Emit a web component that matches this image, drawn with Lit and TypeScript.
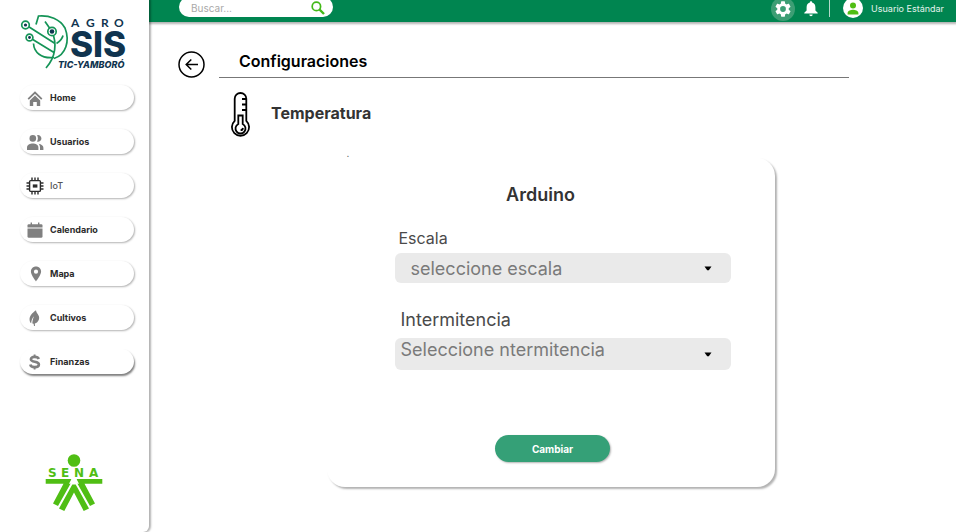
import { LitElement, html, svg, css } from "lit";
import { customElement } from "lit/decorators.js";
import { classMap } from "lit/directives/class-map.js";

const icons = {
  home: svg`<path d="M1.2 9.2 L8 2.6 L14.8 9.2" fill="none" stroke="currentColor" stroke-width="1.8"/><path d="M8 5.6 L13.2 10.6 V16 H9.8 V12 H6.2 V16 H2.8 V10.6Z" fill="currentColor"/>`,
  users: svg`<g fill="currentColor"><circle cx="5.8" cy="4.4" r="3.3"/><path d="M0 16 V13.6 C0 11 3 9.6 5.8 9.6 S11.4 11 11.4 13.6 V16Z"/><path d="M10 1.3 A3.3 3.3 0 1 1 10 7.5 C11.2 5.6 11.2 3.2 10 1.3Z"/><path d="M11.6 9.8 C14.4 10.4 16.4 11.6 16.4 13.8 V16 H13 V13.6 C13 12 12.6 10.8 11.6 9.8Z"/></g>`,
  chip: svg`<g fill="none" stroke="currentColor" stroke-width="1.4"><rect x="2.6" y="2.6" width="10.8" height="10.8" rx="1"/><path d="M5 2.6V-.5M8 2.6V-.5M11 2.6V-.5M5 13.4V16.5M8 13.4V16.5M11 13.4V16.5M2.6 5H-.5M2.6 8H-.5M2.6 11H-.5M13.4 5H16.5M13.4 8H16.5M13.4 11H16.5"/></g><rect x="5.8" y="6.4" width="4.6" height="3.2" fill="currentColor"/>`,
  calendar: svg`<g fill="currentColor"><path d="M.5 5.6 V3.4 Q.5 2.2 1.7 2.2 H14.3 Q15.5 2.2 15.5 3.4 V5.6Z"/><path d="M.5 6.6 H15.5 V14.4 Q15.5 15.8 14.1 15.8 H1.9 Q.5 15.8 .5 14.4Z"/><path d="M3.6 .4H5V4H3.6ZM11 .4h1.4V4H11Z"/></g>`,
  pin: svg`<path fill="currentColor" fill-rule="evenodd" d="M9 .6 C6 .6 3.9 2.8 3.9 5.6 C3.9 9.2 9 15.4 9 15.4 S14.1 9.2 14.1 5.6 C14.1 2.8 12 .6 9 .6Z M9 3.6 A2.1 2.1 0 1 1 9 7.8 A2.1 2.1 0 1 1 9 3.6Z"/>`,
  leaf: svg`<path fill="currentColor" d="M9 .2 C5 3 2.2 6.2 2.6 10 C2.7 11.6 3.2 12.6 4.2 13.2 C4.3 10.6 5.2 8.2 7 6.2 C5.8 9 5.3 11.4 5.4 13.6 L6.6 13.8 L7 16 H8 L7.8 13.6 C11.8 12.4 13.2 7.6 11.4 5.2 C10.6 3.6 9.2 2.4 9 .2Z"/>`,
  dollar: svg`<path fill="none" stroke="currentColor" stroke-width="2.6" d="M11.8 5 C11.3 3.6 9.8 2.9 7.6 2.9 C5.2 2.9 3.9 3.9 3.9 5.3 C3.9 8.9 11.9 6.6 11.9 10.5 C11.9 12.2 10.2 13.1 7.8 13.1 C5.3 13.1 3.6 12.1 3.3 10.4"/><path stroke="currentColor" stroke-width="1.9" d="M7.6 .4V3.4M7.6 12.6V15.6"/>`,
};

const items = [
  { label: "Home", icon: icons.home },
  { label: "Usuarios", icon: icons.users },
  { label: "IoT", icon: icons.chip, current: true },
  { label: "Calendario", icon: icons.calendar },
  { label: "Mapa", icon: icons.pin },
  { label: "Cultivos", icon: icons.leaf },
  { label: "Finanzas", icon: icons.dollar, raised: true },
];

@customElement("app-sidebar")
export class AppSidebar extends LitElement {
  static styles = css`
    :host {
      display: flex;
      flex-direction: column;
      box-sizing: border-box;
      width: 149px;
      padding: 14px 0 20px 20px;
      background: #fff;
      border-bottom-right-radius: 6px;
      box-shadow: 1px 0 2px 1px rgba(0, 0, 0, 0.3);
      font-family: Inter, "Liberation Sans", sans-serif;
    }
    .brand { display: block; width: 106px; height: 57px; }
    .name { font: 700 12px Lato, sans-serif; }
    .big { font: 800 35px Inter, sans-serif; }
    .tag { font: italic 800 9px Inter, sans-serif; }
    nav { display: flex; flex-direction: column; gap: 19px; margin-top: 14px; }
    .item {
      display: flex;
      align-items: center;
      gap: 7px;
      box-sizing: border-box;
      width: 114px;
      height: 25px;
      padding-left: 7px;
      border-radius: 13px;
      background: #fff;
      box-shadow: 1px 1px 2px rgba(0, 0, 0, 0.3);
      color: #2b2b2b;
      font-size: 9px;
      font-weight: 700;
      text-decoration: none;
    }
    .icon { width: 16px; height: 16px; color: #808080; overflow: visible; }
    .current { color: #555; font-weight: 500; }
    .current .icon { color: #2b2b2b; }
    .raised { box-shadow: 1px 2px 2px rgba(0, 0, 0, 0.5); }
    .sena { width: 58px; height: 58px; margin: auto 0 0 25px; }
    .sena-name { font: 700 12px "DejaVu Sans", sans-serif; }
  `;

  render() {
    return html`
      <svg class="brand" viewBox="0 0 106 57" role="img" aria-label="Agro SIS">
        <g fill="none" stroke="#159457" stroke-width="1.7">
          <path d="M16 10.5 L18.5 2 C29 1 40 5 45 14 C50 27 46 41 34 44.500"/>
          <path d="M13.500 29.500 C14 38 21 45 34 43.500"/>
          <path d="M6 11 L35 29.500 M9.500 23.500 L34 38.500 M32 17.500 C37 29 36 43 26 54 M25 7.500 L32 17.500 M36.500 29.500 Q42 26 43 21.500"/>
        </g>
        <g fill="#fff" stroke="#159457" stroke-width="1.700">
          <circle cx="5.500" cy="11" r="3.800"/><circle cx="9.500" cy="23.500" r="3.400"/><circle cx="32" cy="17.500" r="4.200"/>
        </g>
        <g fill="#10344f">
          <circle cx="5.500" cy="11" r="1.600"/><circle cx="9.500" cy="23.500" r="1.400"/><circle cx="32" cy="17.500" r="2.300"/>
          <text class="name" x="51 66 81 94" y="13">AGRO</text>
          <text class="big" x="50" y="43">SIS</text>
          <text class="tag" x="38" y="54">TIC-YAMBORÓ</text>
        </g>
      </svg>
      <nav>
        ${items.map((i) => html`
          <a href="#" class=${classMap({ item: true, current: !!i.current, raised: !!i.raised })}>
            <svg class="icon" viewBox="0 0 16 16" aria-hidden="true">${i.icon}</svg>${i.label}
          </a>`)}
      </nav>
      <svg class="sena" viewBox="0 0 58 58" role="img" aria-label="SENA" fill="#50be14">
        <circle cx="29" cy="6.5" r="6.300"/>
        <text class="sena-name" x="3 16 29 44" y="23">SENA</text>
        <path d="M.7 25 H26 L28 27 H30 L32 25 H57.300 V29.700 H39.500 L50 49.500 L45 52 L32.500 29.700 L30.500 27.500 H27.500 L25.500 29.700 L13 52 L8 49.500 L18.500 29.700 H.7Z"/>
        <path d="M26.500 25 H31.500 L34 29.700 H24Z" fill="#fff"/>
        <path d="M27.300 30.500 H30.700 L44 54.500 L38.700 57 L29 38.500 L19.300 57 L14 54.500Z"/>
      </svg>
    `;
  }
}

@customElement("app-topbar")
export class AppTopbar extends LitElement {
  static styles = css`
    :host {
      display: flex;
      align-items: flex-start;
      box-sizing: border-box;
      height: 22px;
      padding: 0 12px 0 30px;
      background: #008550;
      box-shadow: 0 1px 2px 1px rgba(0, 0, 0, 0.3);
      font-family: Inter, "Liberation Sans", sans-serif;
    }
    .search {
      display: flex;
      align-items: center;
      box-sizing: border-box;
      width: 154px;
      height: 20px;
      margin-top: -3px;
      padding: 2px 8px 0 12px;
      border-radius: 10px;
      background: #fff;
    }
    input {
      flex: 1;
      min-width: 0;
      padding: 0;
      border: 0;
      outline: 0;
      background: none;
      font: 10px Inter, sans-serif;
    }
    input::placeholder { color: #a9a9a9; }
    button { display: block; padding: 0; border: 0; background: none; color: #fff; }
    svg { display: block; }
    .lens { width: 14px; height: 14px; }
    .tools { display: flex; align-items: center; height: 24px; margin: -3px 0 0 auto; }
    .gear { border-radius: 50%; background: #3c9e74; }
    .gear svg { width: 24px; height: 24px; }
    .bell { margin-left: 8px; }
    .bell svg { width: 16px; height: 16px; }
    .rule { width: 1px; height: 18px; margin: 0 13px 2px 10px; background: #b3d9c9; }
    .avatar { width: 20px; height: 20px; margin-bottom: 3px; }
    .user { margin-left: 8px; color: #e4f3ec; font-size: 9px; line-height: 20px; }
  `;

  render() {
    return html`
      <div class="search">
        <input type="text" placeholder="Buscar..." aria-label="Buscar" />
        <button aria-label="Buscar">
          <svg class="lens" viewBox="0 0 14 14" fill="none" stroke="#43b918">
            <circle cx="5.4" cy="5.4" r="4.2" stroke-width="1.7"/>
            <path d="M8.5 8.5 L13 13" stroke-width="2.4"/>
          </svg>
        </button>
      </div>
      <div class="tools">
        <button class="gear" aria-label="Ajustes">
          <svg viewBox="0 0 24 24" fill="#fff"><path d="M19.14 12.94c.04-.3.06-.61.06-.94s-.02-.64-.07-.94l2.03-1.58a.49.49 0 0 0 .12-.61l-1.92-3.32a.49.49 0 0 0-.59-.22l-2.39.96a7 7 0 0 0-1.62-.94l-.36-2.54A.48.48 0 0 0 13.92 2.4h-3.84a.48.48 0 0 0-.47.41l-.36 2.54a7.400 7.400 0 0 0-1.620.94l-2.390-.96a.48.48 0 0 0-.59.22L2.740 8.870a.48.48 0 0 0 .12.61l2.030 1.580a6 6 0 0 0 0 1.880l-2.030 1.580a.49.49 0 0 0-.12.61l1.920 3.320c.12.22.37.29.59.22l2.390-.96c.5.38 1.030.7 1.620.94l.36 2.540c.05.24.24.41.48.41h3.840c.24 0 .44-.17.47-.41l.36-2.540a7.400 7.400 0 0 0 1.620-.94l2.390.96c.22.08.47 0 .59-.22l1.920-3.320a.48.48 0 0 0-.12-.61zM12 15.600A3.600 3.600 0 1 1 12 8.400a3.600 3.600 0 0 1 0 7.200z" transform="translate(2.400 2.400) scale(.8)"/></svg>
        </button>
        <button class="bell" aria-label="Notificaciones">
          <svg viewBox="0 0 16 16" fill="#fff"><path d="M8 .3 C7.3 .3 6.9 .8 6.9 1.6 C4.5 2.2 3.6 4.2 3.6 6.4 V9.4 L1.3 11.8 V12.6 H14.7 V11.8 L12.4 9.4 V6.4 C12.4 4.2 11.5 2.2 9.1 1.6 C9.1 .8 8.7 .3 8 .3Z M6.3 13.5 H9.7 A1.7 1.7 0 0 1 6.3 13.5Z"/></svg>
        </button>
        <span class="rule"></span>
        <svg class="avatar" viewBox="0 0 20 20" aria-hidden="true"><circle cx="10" cy="10" r="10" fill="#fff"/><g fill="#50be14"><circle cx="10" cy="7.6" r="3"/><path d="M4.6 16.4 V15 C4.6 12.8 8 11.8 10 11.8 S15.4 12.8 15.4 15 V16.4Z"/></g></svg>
        <span class="user">Usuario Estándar</span>
      </div>
    `;
  }
}

@customElement("app-root")
export class AppRoot extends LitElement {
  static styles = css`
    :host {
      display: flex;
      min-height: 100vh;
      background: #fff;
      color: #333;
      font-family: Inter, "Liberation Sans", sans-serif;
    }
    app-sidebar { flex: none; position: relative; z-index: 1; }
    .page { flex: 1; min-width: 0; }
    .head { display: flex; align-items: flex-start; gap: 14px; margin: 29px 107px 0 29px; }
    .back { flex: none; padding: 0; border: 0; background: none; }
    .back svg { display: block; width: 27px; height: 27px; }
    h1 {
      flex: 1;
      margin: 0;
      padding: 0 0 6px 20px;
      border-bottom: 1px solid #777;
      color: #000;
      font-size: 16px;
      font-weight: 600;
      line-height: 20px;
    }
    .topic { display: flex; gap: 20px; margin: 14px 0 0 81px; }
    .topic svg { width: 21px; height: 46px; }
    h2 { margin: 0; font-size: 16px; font-weight: 700; line-height: 42px; }
    .panel { width: 448px; max-width: 100%; margin: 10px auto 0; padding-right: 4px; }
    .note { margin: 0 0 0 20px; color: #555; font-size: 10px; line-height: 10px; }
    .card {
      display: flex;
      flex-direction: column;
      padding: 24px 44px 25px 68px;
      border-radius: 18px;
      background: #fff;
      box-shadow: 2px 2px 2px rgba(0, 0, 0, 0.3);
    }
    h3 { margin: 0 44px 0 0; font-size: 18px; font-weight: 600; line-height: 26px; text-align: center; }
    label { color: #4a4a4a; }
    .small { margin: 16px 0 1px; padding-left: 4px; font-size: 16px; line-height: 28px; }
    .large { margin: 24px 0 5px; padding-left: 6px; font-size: 18px; line-height: 26px; }
    .field { display: grid; align-items: center; }
    .field > * { grid-area: 1 / 1; }
    .field svg { justify-self: end; width: 8px; height: 5px; margin-right: 19px; pointer-events: none; }
    select {
      appearance: none;
      width: 100%;
      height: 30px;
      padding: 0 40px 0 16px;
      border: 0;
      border-radius: 6px;
      background: #eaeaea;
      color: #7a7a7a;
      font: 18px Inter, "Liberation Sans", sans-serif;
    }
    .upper { height: 32px; padding: 0 40px 10px 6px; }
    .submit {
      align-self: center;
      width: 115px;
      height: 27px;
      margin: 65px 20px 0 0;
      border: 0;
      border-radius: 14px;
      background: #35a077;
      box-shadow: 1px 1px 2px rgba(0, 0, 0, 0.3);
      color: #fff;
      font: 700 10px Inter, sans-serif;
    }
  `;

  render() {
    const caret = html`<svg viewBox="0 0 8 5" aria-hidden="true"><path d="M.5 .5 H7.5 L4.8 4.3 H3.2Z"/></svg>`;
    return html`
      <app-sidebar></app-sidebar>
      <div class="page">
        <app-topbar></app-topbar>
        <main>
          <div class="head">
            <button class="back" aria-label="Volver">
              <svg viewBox="0 0 27 27" fill="none" stroke="#000" stroke-width="1.5"><circle cx="13.5" cy="13.5" r="12.5"/><path d="M20 13.5 H8.5 M13.3 8.5 L8.2 13.5 L13.3 18.5"/></svg>
            </button>
            <h1>Configuraciones</h1>
          </div>
          <div class="topic">
            <svg viewBox="0 0 21 46" fill="none" stroke="#000" stroke-width="1.8" aria-hidden="true">
              <path d="M4.7 28.8 V6.8 A5.8 5.8 0 0 1 16.3 6.8 V28.8 A8.6 8.6 0 1 1 4.7 28.8Z"/>
              <path d="M8.3 32 V23.5 H12.7 V32 A5 5 0 1 1 8.3 32Z"/>
              <path d="M12 7 H16 M12 12.5 H16 M12 18 H16 M13 36 A2.6 2.6 0 0 1 10.6 38.2"/>
            </svg>
            <h2>Temperatura</h2>
          </div>
          <div class="panel">
            <p class="note">.</p>
            <form class="card">
              <h3>Arduino</h3>
              <label class="small" for="escala">Escala</label>
              <div class="field">
                <select id="escala"><option>seleccione escala</option></select>${caret}
              </div>
              <label class="large" for="intermitencia">Intermitencia</label>
              <div class="field">
                <select id="intermitencia" class="upper"><option>Seleccione ntermitencia</option></select>${caret}
              </div>
              <button class="submit" type="button">Cambiar</button>
            </form>
          </div>
        </main>
      </div>
    `;
  }
}
